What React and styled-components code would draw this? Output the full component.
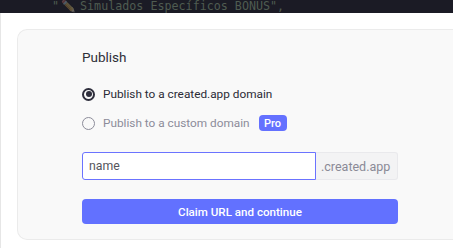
import React, { useState } from "react";
import styled, { createGlobalStyle, css } from "styled-components";

const GlobalStyle = createGlobalStyle`
  html, body {
    margin: 0;
    padding: 0;
    background: #ffffff;
    overflow: hidden;
  }
  body {
    font-family: Roboto, Inter, "Noto Sans", Arial, sans-serif;
  }
  * {
    box-sizing: border-box;
  }
`;

const Screen = styled.div`
  width: 453px;
  height: 248px;
  display: flex;
  flex-direction: column;
  overflow: hidden;
`;

const CodeStrip = styled.div`
  height: 13px;
  flex: none;
  background: #1b1b25;
  overflow: hidden;
  display: flex;
  align-items: flex-end;
  padding-left: 52px;
  font-family: "DejaVu Sans Mono", "Liberation Mono", monospace;
  font-size: 11.7px;
  line-height: 14px;
  color: #4f5c51;
  white-space: pre;
`;

const Emoji = styled.span`
  display: inline-block;
  flex: none;
  width: 21px;
  padding-left: 2px;
  opacity: 0.35;
  filter: grayscale(0.4);
`;

const Page = styled.div`
  flex: 1;
  border-left: 1px solid #e6e6e6;
  padding: 16px 0 0 16px;
  background: #fff;
`;

const Card = styled.div`
  width: 460px;
  height: 211px;
  background: #f9f9f9;
  border: 1px solid #ebebeb;
  border-right: none;
  border-radius: 10px 0 0 10px;
  padding: 17px 0 0 64px;
  display: flex;
  flex-direction: column;
`;

const Title = styled.div`
  font-size: 13.5px;
  line-height: 20px;
  color: #2f2f38;
  margin-bottom: 18px;
`;

const Options = styled.div`
  display: flex;
  flex-direction: column;
  gap: 11px;
  margin-bottom: 20px;
`;

const Option = styled.label`
  display: flex;
  align-items: center;
  height: 18px;
  font-size: 11.8px;
  color: ${(p) => (p.active ? "#2b2b36" : "#8c8c9a")};
  cursor: pointer;
`;

const Radio = styled.span`
  width: 13px;
  height: 13px;
  border-radius: 50%;
  margin-right: 8px;
  flex: none;
  display: flex;
  align-items: center;
  justify-content: center;
  border: 1.5px solid #8c8c9a;
  ${(p) =>
    p.checked &&
    css`
      border: 2px solid #2e2e3c;
      &::after {
        content: "";
        width: 6px;
        height: 6px;
        border-radius: 50%;
        background: #2e2e3c;
      }
    `}
`;

const Badge = styled.span`
  margin-left: 9px;
  width: 28px;
  height: 16px;
  display: flex;
  align-items: center;
  justify-content: center;
  background: #6471ff;
  color: #fff;
  font-size: 11px;
  font-weight: 500;
  border-radius: 4px;
`;

const Field = styled.div`
  display: flex;
  width: 316px;
  height: 28px;
  margin-bottom: 19px;
`;

const NameInput = styled.input`
  width: 234px;
  height: 28px;
  border: 1px solid #6b73ff;
  border-radius: 3px 0 0 3px;
  background: #fff;
  padding: 0 6px;
  font-family: inherit;
  font-size: 12.3px;
  color: #55555c;
  outline: none;
`;

const Suffix = styled.span`
  flex: 1;
  display: flex;
  align-items: center;
  padding-left: 5px;
  background: #f3f3f4;
  border: 1px solid #e9e9ec;
  border-left: none;
  border-radius: 0 3px 3px 0;
  font-size: 12.5px;
  color: #8a8a96;
`;

const Claim = styled.button`
  width: 316px;
  height: 25px;
  border: none;
  border-radius: 4px;
  background: #6271ff;
  color: #fff;
  font-family: inherit;
  font-size: 11.6px;
  font-weight: 500;
  cursor: pointer;
`;

export default function App() {
  const [choice, setChoice] = useState("created");
  const [name, setName] = useState("name");

  return (
    <>
      <GlobalStyle />
      <Screen>
        <CodeStrip>
          {'"'}
          <Emoji>✏️</Emoji>
          {'Simulados Específicos BÔNUS",'}
        </CodeStrip>
        <Page>
          <Card>
            <Title>Publish</Title>
            <Options>
              <Option active={choice === "created"} onClick={() => setChoice("created")}>
                <Radio checked={choice === "created"} />
                Publish to a created.app domain
              </Option>
              <Option active={choice === "custom"} onClick={() => setChoice("custom")}>
                <Radio checked={choice === "custom"} />
                Publish to a custom domain
                <Badge>Pro</Badge>
              </Option>
            </Options>
            <Field>
              <NameInput value={name} onChange={(e) => setName(e.target.value)} />
              <Suffix>.created.app</Suffix>
            </Field>
            <Claim>Claim URL and continue</Claim>
          </Card>
        </Page>
      </Screen>
    </>
  );
}
